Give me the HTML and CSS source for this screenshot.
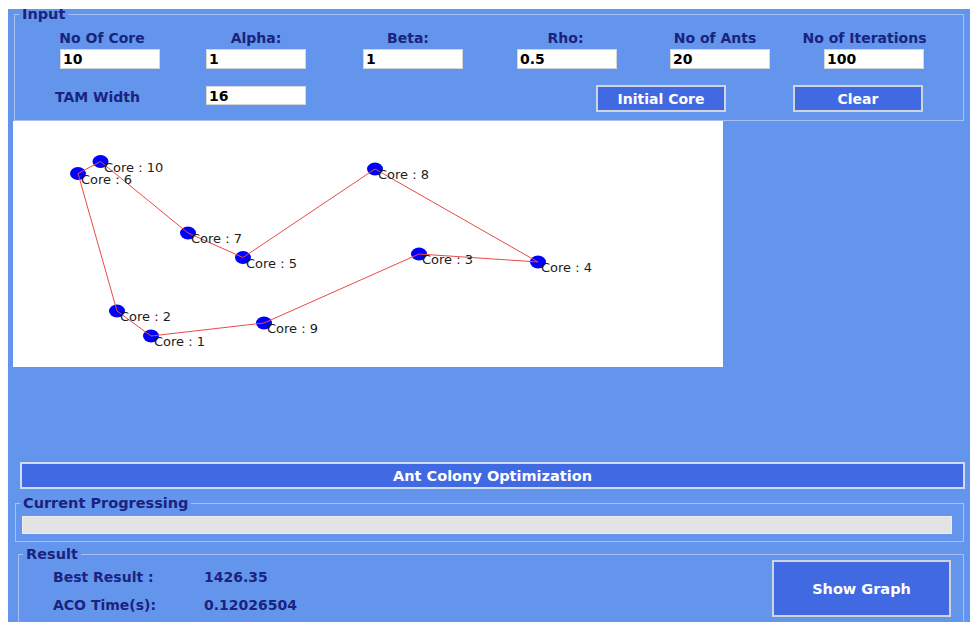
FILE: index.html
```html
<!DOCTYPE html>
<html lang="en">
<head>
<meta charset="utf-8">
<title>Ant Colony Optimization – Core Scheduling</title>
<link rel="stylesheet" href="styles.css">
</head>
<body>
<div class="app">

  <fieldset class="group group-input">
    <legend>Input</legend>
    <div class="params">
      <label class="param"><span class="param-label shift-core">No Of Core</span><input class="field" type="text" value="10"></label>
      <label class="param"><span class="param-label">Alpha:</span><input class="field" type="text" value="1"></label>
      <label class="param"><span class="param-label shift-beta">Beta:</span><input class="field" type="text" value="1"></label>
      <label class="param"><span class="param-label shift-rho">Rho:</span><input class="field" type="text" value="0.5"></label>
      <label class="param"><span class="param-label shift-ants">No of Ants</span><input class="field" type="text" value="20"></label>
      <label class="param"><span class="param-label shift-iter">No of Iterations</span><input class="field" type="text" value="100"></label>
    </div>
    <div class="tam-row">
      <span class="tam-label">TAM Width</span>
      <input class="field" type="text" value="16">
      <button class="btn btn-init" type="button">Initial Core</button>
      <button class="btn btn-clear" type="button">Clear</button>
    </div>
  </fieldset>

  <div class="graph">
    <svg width="710" height="246" viewBox="0 0 710 246">
      <g class="nodes">
        <ellipse cx="87.5" cy="40.5" rx="8" ry="6.5"/>
        <ellipse cx="65" cy="52.5" rx="8" ry="6.5"/>
        <ellipse cx="175" cy="112" rx="8" ry="6.5"/>
        <ellipse cx="230" cy="136.5" rx="8" ry="6.5"/>
        <ellipse cx="362" cy="48" rx="8" ry="6.5"/>
        <ellipse cx="406" cy="133" rx="8" ry="6.5"/>
        <ellipse cx="525" cy="141" rx="8" ry="6.5"/>
        <ellipse cx="104" cy="190" rx="8" ry="6.5"/>
        <ellipse cx="138" cy="215" rx="8" ry="6.5"/>
        <ellipse cx="251" cy="202" rx="8" ry="6.5"/>
      </g>
      <polygon class="tour" points="87.5,40.5 175,112 230,136.5 362,48 525,141 406,133 251,202 138,215 104,190 65,52.5"/>
      <g class="labels">
        <text x="91" y="50.5">Core : 10</text>
        <text x="68" y="62.5">Core : 6</text>
        <text x="178" y="122">Core : 7</text>
        <text x="233" y="146.5">Core : 5</text>
        <text x="365" y="58">Core : 8</text>
        <text x="409" y="143">Core : 3</text>
        <text x="528" y="151">Core : 4</text>
        <text x="107" y="200">Core : 2</text>
        <text x="141" y="225">Core : 1</text>
        <text x="254" y="212">Core : 9</text>
      </g>
    </svg>
  </div>

  <button class="btn btn-run" type="button">Ant Colony Optimization</button>

  <fieldset class="group group-progress">
    <legend>Current Progressing</legend>
    <div class="progress"></div>
  </fieldset>

  <fieldset class="group group-result">
    <legend>Result</legend>
    <div class="result-body">
      <div class="stats">
        <span>Best Result :</span><span>1426.35</span>
        <span>ACO Time(s):</span><span>0.12026504</span>
      </div>
      <button class="btn btn-graph" type="button">Show Graph</button>
    </div>
  </fieldset>

</div>
</body>
</html>
```

FILE: styles.css
```css
* {
  box-sizing: border-box;
}

html,
body {
  margin: 0;
  background: #ffffff;
}

body {
  padding: 9px 0 0 8px;
  font-family: "DejaVu Sans", "Liberation Sans", sans-serif;
}

/* main window */
.app {
  width: 962px;
  height: 613px;
  background: #6495ed;
  overflow: hidden;
  color: #1a237e;
  font-weight: bold;
  font-size: 14px;
  display: flex;
  flex-direction: column;
  align-items: flex-start;
}

.app > * {
  flex-shrink: 0;
}

/* group boxes */
.group {
  margin: 0;
  padding: 0;
  border: 1px solid #a7bff2;
  min-width: 0;
}

.group legend {
  font-size: 14.5px;
  line-height: 12px;
  padding: 0 3px;
  margin-left: 4px;
  color: #1a237e;
}

.group-input {
  width: 950px;
  margin: -1px 0 0 6px;
}

/* parameter inputs */
.params {
  display: grid;
  grid-template-columns: 146px 157px 154px 153px 154px 100px;
  margin: 10px 0 0 45px;
}

.param {
  display: flex;
  flex-direction: column;
  align-items: center;
  gap: 3px;
  width: 100px;
}

.param-label {
  line-height: 16px;
  white-space: nowrap;
}

.shift-core { margin-right: 16px; }
.shift-beta { margin-right: 10px; }
.shift-rho { margin-right: 3px; }
.shift-ants { margin-right: 10px; }
.shift-iter { margin-right: 19px; }

.field {
  width: 100px;
  height: 20px;
  margin: 0;
  padding: 0 2px;
  border: 1px solid #d6d6d6;
  background: #ffffff;
  color: #000000;
  font: bold 14px "DejaVu Sans", "Liberation Sans", sans-serif;
  outline: none;
}

.tam-row {
  display: flex;
  align-items: flex-start;
  margin: 16px 0 8px 40px;
}

.tam-label {
  width: 151px;
  line-height: 16px;
  margin-top: 4px;
}

.tam-row .field {
  height: 19px;
  margin-top: 1px;
}

/* buttons */
.btn {
  margin: 0;
  padding: 0;
  background: #4169e1;
  color: #ffffff;
  border: 2px solid #d2d4dc;
  font: bold 14px "DejaVu Sans", "Liberation Sans", sans-serif;
}

.btn-init {
  width: 130px;
  height: 27px;
  margin-left: 290px;
}

.btn-clear {
  width: 130px;
  height: 27px;
  margin-left: 67px;
}

/* tour drawing */
.graph {
  width: 710px;
  height: 246px;
  margin-left: 5px;
  background: #ffffff;
}

.graph svg {
  display: block;
}

.nodes ellipse {
  fill: #0000ff;
}

.tour {
  fill: none;
  stroke: #ec4a44;
  stroke-width: 1;
}

.labels text {
  font-family: "DejaVu Sans", "Liberation Sans", sans-serif;
  font-weight: normal;
  font-size: 13px;
  fill: #1c1c1c;
}

.btn-run {
  width: 945px;
  height: 27px;
  margin: 95px 0 0 12px;
  border: 2px solid #cfdcf8;
  font-size: 14.5px;
}

/* progress */
.group-progress {
  width: 949px;
  margin: 8px 0 0 7px;
}

.progress {
  width: 930px;
  height: 18px;
  margin: 7px 0 7px 6px;
  background: #e3e3e3;
  border: 1px solid #ececec;
}

/* results */
.group-result {
  width: 946px;
  height: 90px;
  margin: 6px 0 0 10px;
}

.result-body {
  display: flex;
  justify-content: space-between;
  align-items: flex-start;
  padding: 0 12px 0 34px;
}

.stats {
  display: grid;
  grid-template-columns: 151px auto;
  row-gap: 12px;
  margin-top: 9px;
  line-height: 16px;
}

.btn-graph {
  width: 179px;
  height: 57px;
  font-size: 14.5px;
}
```
